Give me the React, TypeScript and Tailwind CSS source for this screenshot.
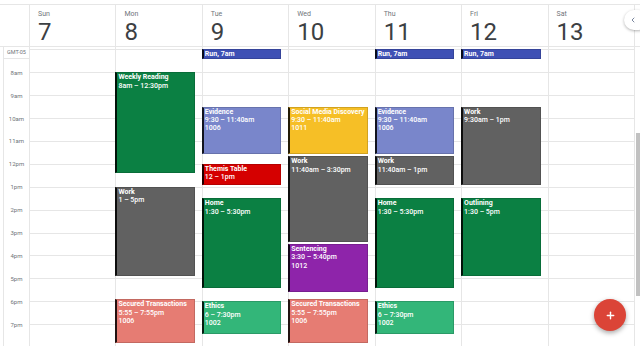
import { ChevronLeft, Plus } from 'lucide-react';

type CalEvent = {
  day: number;
  start: number;
  end: number;
  title: string;
  lines: string[];
  color: string;
};

const HOUR = 22.9;
const OFFSET = 2.4;

const days = [
  { name: 'Sun', date: 7 },
  { name: 'Mon', date: 8 },
  { name: 'Tue', date: 9 },
  { name: 'Wed', date: 10 },
  { name: 'Thu', date: 11 },
  { name: 'Fri', date: 12 },
  { name: 'Sat', date: 13 },
];

const hours = [7, 8, 9, 10, 11, 12, 13, 14, 15, 16, 17, 18, 19];
const labels = ['8am', '9am', '10am', '11am', '12pm', '1pm', '2pm', '3pm', '4pm', '5pm', '6pm', '7pm'];

const events: CalEvent[] = [
  { day: 1, start: 8, end: 12.5, title: 'Weekly Reading', lines: ['8am – 12:30pm'], color: 'bg-[#0b8043]' },
  { day: 1, start: 13, end: 17, title: 'Work', lines: ['1 – 5pm'], color: 'bg-[#616161]' },
  { day: 1, start: 17.9167, end: 19.9167, title: 'Secured Transactions', lines: ['5:55 – 7:55pm', '1006'], color: 'bg-[#e67c73]' },

  { day: 2, start: 7, end: 7.5, title: 'Run, 7am', lines: [], color: 'bg-[#3f51b5]' },
  { day: 2, start: 9.5, end: 11.667, title: 'Evidence', lines: ['9:30 – 11:40am', '1006'], color: 'bg-[#7986cb]' },
  { day: 2, start: 12, end: 13, title: 'Themis Table', lines: ['12 – 1pm'], color: 'bg-[#d50000]' },
  { day: 2, start: 13.5, end: 17.5, title: 'Home', lines: ['1:30 – 5:30pm'], color: 'bg-[#0b8043]' },
  { day: 2, start: 18, end: 19.5, title: 'Ethics', lines: ['6 – 7:30pm', '1002'], color: 'bg-[#33b679]' },

  { day: 3, start: 9.5, end: 11.667, title: 'Social Media Discovery', lines: ['9:30 – 11:40am', '1011'], color: 'bg-[#f6bf26]' },
  { day: 3, start: 11.667, end: 15.5, title: 'Work', lines: ['11:40am – 3:30pm'], color: 'bg-[#616161]' },
  { day: 3, start: 15.5, end: 17.667, title: 'Sentencing', lines: ['3:30 – 5:40pm', '1012'], color: 'bg-[#8e24aa]' },
  { day: 3, start: 17.9167, end: 19.9167, title: 'Secured Transactions', lines: ['5:55 – 7:55pm', '1006'], color: 'bg-[#e67c73]' },

  { day: 4, start: 7, end: 7.5, title: 'Run, 7am', lines: [], color: 'bg-[#3f51b5]' },
  { day: 4, start: 9.5, end: 11.667, title: 'Evidence', lines: ['9:30 – 11:40am', '1006'], color: 'bg-[#7986cb]' },
  { day: 4, start: 11.667, end: 13, title: 'Work', lines: ['11:40am – 1pm'], color: 'bg-[#616161]' },
  { day: 4, start: 13.5, end: 17.5, title: 'Home', lines: ['1:30 – 5:30pm'], color: 'bg-[#0b8043]' },
  { day: 4, start: 18, end: 19.5, title: 'Ethics', lines: ['6 – 7:30pm', '1002'], color: 'bg-[#33b679]' },

  { day: 5, start: 7, end: 7.5, title: 'Run, 7am', lines: [], color: 'bg-[#3f51b5]' },
  { day: 5, start: 9.5, end: 13, title: 'Work', lines: ['9:30am – 1pm'], color: 'bg-[#616161]' },
  { day: 5, start: 13.5, end: 17, title: 'Outlining', lines: ['1:30 – 5pm'], color: 'bg-[#0b8043]' },
];

function EventBlock({ ev }: { ev: CalEvent }) {
  const top = OFFSET + (ev.start - 7) * HOUR;
  const height = (ev.end - ev.start) * HOUR - 2;
  return (
    <div
      className={`absolute left-[-1px] right-[7px] overflow-hidden border border-black/15 border-l-2 border-l-black/85 pl-[1px] text-white ${ev.color}`}
      style={{ top, height }}
    >
      <div className="text-[7px] leading-[8.4px] font-bold whitespace-nowrap">{ev.title}</div>
      {ev.lines.map((l) => (
        <div key={l} className="text-[7px] leading-[8.4px] font-medium whitespace-nowrap">
          {l}
        </div>
      ))}
    </div>
  );
}

export default function App() {
  return (
    <div className="relative w-[640px] h-[346px] overflow-hidden bg-white font-['Roboto',sans-serif] flex flex-col">
      <div className="h-[4px] shrink-0" />

      {/* header */}
      <div className="flex h-[43px] shrink-0 border-y border-[#e6e6e6]">
        <div className="w-[29px] shrink-0" />
        {days.map((d) => (
          <div key={d.name} className="w-[86.43px] shrink-0 border-l border-[#e6e6e6] pl-[8px] pt-[4.7px]">
            <div className="text-[7px] leading-[9px] text-[#70757a]">{d.name}</div>
            <div className="mt-[1.8px] text-[24px] leading-[24px] text-[#3c4043]">{d.date}</div>
          </div>
        ))}
        <div className="flex-1 border-l border-[#e6e6e6]" />
      </div>

      {/* body */}
      <div className="flex flex-1 overflow-hidden">
        <div className="w-[29px] shrink-0 pl-[3px]">
          <div className="h-full border-l border-[#e6e6e6]">
            <div className="h-[12px] border-b border-[#e6e6e6] flex items-center justify-center text-[5.5px] text-[#70757a]">
              GMT-05
            </div>
            <div className="mt-[1.85px]">
              {labels.map((l) => (
                <div key={l} className="h-[22.9px] flex items-center justify-center text-[6px] text-[#70757a]">
                  {l}
                </div>
              ))}
            </div>
          </div>
        </div>

        {days.map((d, i) => (
          <div key={d.name} className="relative w-[86.43px] shrink-0 border-l border-[#e6e6e6]">
            <div className="h-[2.4px]" />
            {hours.map((h) => (
              <div key={h} className="h-[22.9px] border-t border-[#e6e6e6]" />
            ))}
            {events
              .filter((e) => e.day === i)
              .map((e) => (
                <EventBlock key={e.title + e.start} ev={e} />
              ))}
          </div>
        ))}

        <div className="flex-1 border-l border-[#e6e6e6] pt-[85.7px] pl-[1px]">
          <div className="h-[163px] bg-[#c1c1c1]" />
        </div>
      </div>

      {/* collapse tab */}
      <div className="absolute left-[624px] top-[10px] w-[24px] h-[20px] rounded-full bg-white shadow-[0_1px_3px_rgba(0,0,0,0.3)] flex items-center pl-[5px]">
        <ChevronLeft size={8} strokeWidth={2.5} className="text-[#5f6e8a]" />
      </div>

      {/* fab */}
      <button className="absolute left-[594px] top-[299px] w-[32px] h-[32px] rounded-full bg-[#db4437] shadow-[0_2px_5px_rgba(0,0,0,0.35)] flex items-center justify-center">
        <Plus size={11} strokeWidth={3} className="text-white" />
      </button>
    </div>
  );
}
